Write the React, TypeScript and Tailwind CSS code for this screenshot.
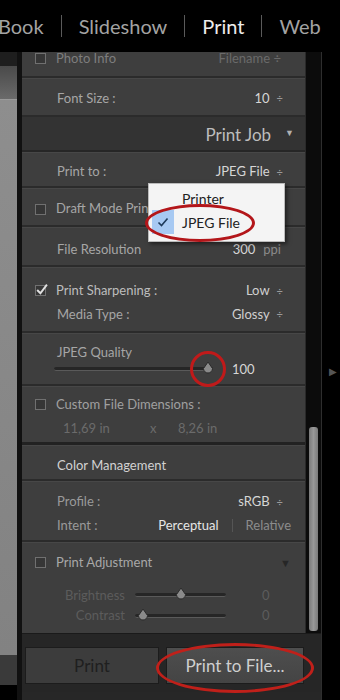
import React from "react";

const font = { fontFamily: "Lato, 'Open Sans', sans-serif" };

const Stepper = () => <span className="ml-[7px] text-[11px] text-[#9a9a9a]">÷</span>;

const Check = ({ checked = false }: { checked?: boolean }) => (
  <span className="relative w-[11px] h-[11px] border border-[#707070] bg-[#363636] shrink-0">
    {checked && (
      <svg viewBox="0 0 12 12" className="absolute -left-[1px] -top-[3px] w-[13px] h-[13px]">
        <path d="M2 6.5 L5 9.5 L11 1.5" fill="none" stroke="#e0e0e0" strokeWidth="1.8" />
      </svg>
    )}
  </span>
);

const Row = ({ h, children, className = "" }: { h: string; children: React.ReactNode; className?: string }) => (
  <div className={`${h} border-b-2 border-[#2b2b2b] shadow-[inset_0_1px_0_#474747] ${className}`}>{children}</div>
);

const Slider = ({ w, pos }: { w: string; pos: string }) => (
  <div className={`relative ${w} h-[4px] rounded-full bg-[#262626] border-b border-[#5a5a5a]`}>
    <div className={`absolute ${pos} -top-[6px] w-[12px] h-[13px]`}>
      <svg viewBox="0 0 12 13" className="w-full h-full">
        <path d="M6 1 L10.5 7.5 A4.5 4.5 0 1 1 1.5 7.5 Z" fill="#8a8a8a" stroke="#2a2a2a" strokeWidth="1" />
      </svg>
    </div>
  </div>
);

export default function App() {
  return (
    <div className="relative w-[340px] h-[700px] bg-black overflow-hidden" style={font}>
      {/* module picker */}
      <div className="h-[52px] flex items-center text-[20px] text-[#a3a3a3]">
        <span className="ml-[-2px]">Book</span>
        <span className="mx-[17px] w-px h-[22px] bg-[#5a5a5a]" />
        <span>Slideshow</span>
        <span className="mx-[17px] w-px h-[22px] bg-[#5a5a5a]" />
        <span className="text-[#ececec]">Print</span>
        <span className="mx-[17px] w-px h-[22px] bg-[#5a5a5a]" />
        <span>Web</span>
      </div>

      <div className="flex h-[648px]">
        {/* left preview edge */}
        <div className="w-[17px] flex flex-col">
          <div className="h-[14px] bg-[#1e1e1e]" />
          <div className="h-[34px] bg-gradient-to-b from-[#4a4a4a] to-[#6a6a6a] border-b border-[#9a9a9a]" />
          <div className="h-[555px] bg-gradient-to-b from-[#8e8e8e] to-[#828282]" />
          <div className="h-[30px] bg-[#3a3a3a]" />
        </div>
        <div className="w-[5px] bg-[#111]" />

        {/* right panel */}
        <div className="w-[299px] flex flex-col bg-[#272727]">
          <div className="flex h-[581px]">
            <div className="w-[284px] overflow-hidden bg-[#3e3e3e] border-r border-[#2a2a2a] text-[13px] text-[#a6a6a6]">
              <Row h="h-[28px]" className="flex items-center pl-[13px] pr-[24px] -mt-[2px]">
                <span className="flex -mt-[10px]"><Check /></span>
                <span className="ml-[10px] flex-1 text-[#7d7d7d] -mt-[9px]">Photo Info</span>
                <span className="text-[#6a6a6a] -mt-[9px]">Filename ÷</span>
              </Row>
              <Row h="h-[39px]" className="flex items-center pl-[35px] pr-[22px] pt-[4px]">
                <span className="flex-1">Font Size :</span>
                <span className="text-[#d6d6d6]">10</span>
                <Stepper />
              </Row>
              <div className="h-[35px] bg-[#333] border-b-2 border-[#262626] flex items-center justify-end pr-[11px] pt-[3px]">
                <span className="text-[17px] text-[#bdbdbd]">Print Job</span>
                <span className="ml-[14px] text-[9px] text-[#b0b0b0] -mt-[4px]">▼</span>
              </div>
              <Row h="h-[36px]" className="flex items-center pl-[35px] pr-[22px] pt-[6px]">
                <span className="flex-1">Print to :</span>
                <span className="text-[#d6d6d6]">JPEG File</span>
                <Stepper />
              </Row>
              <Row h="h-[39px]" className="flex items-center pl-[13px] pr-[22px] pt-[5px]">
                <Check />
                <span className="ml-[10px] flex-1">Draft Mode Printing</span>
              </Row>
              <Row h="h-[40px]" className="flex items-center pl-[35px] pr-[24px] pt-[8px]">
                <span className="flex-1">File Resolution</span>
                <span className="text-[#d6d6d6]">300</span>
                <span className="ml-[8px] text-[#8a8a8a]">ppi</span>
              </Row>
              <Row h="h-[66px]" className="flex flex-col justify-center gap-[4px] pl-[13px] pr-[22px] pt-[7px]">
                <div className="flex items-center">
                  <Check checked />
                  <span className="ml-[10px] flex-1 text-[#bdbdbd]">Print Sharpening :</span>
                  <span className="text-[#d0d0d0]">Low</span>
                  <Stepper />
                </div>
                <div className="flex items-center pl-[22px]">
                  <span className="flex-1">Media Type :</span>
                  <span className="text-[#d0d0d0]">Glossy</span>
                  <Stepper />
                </div>
              </Row>
              <Row h="h-[53px]" className="flex flex-col pl-[35px] pr-[22px] pt-[10px]">
                <span>JPEG Quality</span>
                <div className="flex items-center -mt-[3px]">
                  <Slider w="w-[159px] -ml-[3px]" pos="left-[148px]" />
                  <span className="ml-[19px] text-[#d6d6d6]">100</span>
                </div>
              </Row>
              <div className="h-[59px] border-b-[3px] border-[#222] shadow-[inset_0_1px_0_#474747] flex flex-col justify-center gap-[4px] pl-[13px] pt-[5px]">
                <div className="flex items-center">
                  <Check />
                  <span className="ml-[10px] text-[#a0a0a0]">Custom File Dimensions :</span>
                </div>
                <div className="flex text-[#6b6b6b] pl-[28px]">
                  <span className="w-[87px]">11,69 in</span>
                  <span className="w-[28px]">x</span>
                  <span>8,26 in</span>
                </div>
              </div>
              <Row h="h-[36px]" className="flex items-center pl-[35px] pt-[7px]">
                <span className="text-[#d2d2d2]">Color Management</span>
              </Row>
              <Row h="h-[61px]" className="flex flex-col justify-center gap-[4px] pl-[35px] pr-[14px] pt-[6px]">
                <div className="flex items-center pr-[8px]">
                  <span className="flex-1 text-[#9a9a9a]">Profile :</span>
                  <span className="text-[#d6d6d6]">sRGB</span>
                  <Stepper />
                </div>
                <div className="flex items-center">
                  <span className="flex-1 text-[#9a9a9a]">Intent :</span>
                  <span className="text-[#e6e6e6]">Perceptual</span>
                  <span className="mx-[13px] w-px h-[13px] bg-[#555]" />
                  <span className="text-[#8c8c8c]">Relative</span>
                </div>
              </Row>
              <div className="h-[88px] shadow-[inset_0_1px_0_#474747] pl-[13px] pr-[14px] pt-[11px]">
                <div className="flex items-center">
                  <Check />
                  <span className="ml-[10px] flex-1 text-[#a8a8a8]">Print Adjustment</span>
                  <span className="text-[11px] text-[#262626]">▼</span>
                </div>
                <div className="mt-[13px] flex items-center text-[#5c5c5c]">
                  <span className="w-[90px] text-right">Brightness</span>
                  <div className="ml-[10px]"><Slider w="w-[91px]" pos="left-[40px]" /></div>
                  <span className="ml-[36px]">0</span>
                </div>
                <div className="mt-[1px] flex items-center text-[#5c5c5c]">
                  <span className="w-[90px] text-right">Contrast</span>
                  <div className="ml-[10px]"><Slider w="w-[91px]" pos="left-[2px]" /></div>
                  <span className="ml-[36px]">0</span>
                </div>
              </div>
            </div>
            {/* scrollbar */}
            <div className="w-[15px] bg-[#0c0c0c] flex flex-col items-center">
              <div className="mt-[375px] w-[9px] h-[204px] rounded-[3px] bg-gradient-to-r from-[#7a7a7a] via-[#989898] to-[#7a7a7a]" />
            </div>
          </div>
          {/* footer buttons */}
          <div className="h-[59px] bg-[#262626] border-t border-[#1a1a1a] flex gap-[7px] pl-[3px] pr-[17px] pt-[13px] pb-[8px]">
            <div className="w-[134px] bg-[#3c3c3c] border border-[#1c1c1c] flex items-center justify-center text-[17px] text-[#1f1f1f]">
              Print
            </div>
            <div className="flex-1 bg-gradient-to-b from-[#4e4e4e] to-[#444] border border-[#1c1c1c] flex items-center justify-center text-[17px] text-[#cfcfcf]">
              Print to File...
            </div>
          </div>
        </div>

        <div className="w-px bg-[#2e2e2e]" />
        <div className="flex-1 flex items-start">
          <span className="mt-[312px] ml-[7px] text-[10px] text-[#555]">▶</span>
        </div>
      </div>

      {/* Print to menu */}
      <div className="absolute left-[148px] top-[183px] w-[137px] h-[59px] bg-[#f4f4f4] border border-[#bbb] shadow-[2px_2px_4px_rgba(0,0,0,0.5)] text-[14px] text-[#222]">
        <div className="h-[26px] flex items-center pl-[33px] pt-[2px]">Printer</div>
        <div className="h-[24px] flex items-center">
          <div className="ml-[3px] w-[22px] h-full bg-[#a7c9f2] flex items-center justify-center">
            <svg viewBox="0 0 12 12" className="w-[12px] h-[12px]">
              <path d="M1.5 6.5 L4.5 9.5 L10.5 2.5" fill="none" stroke="#1e3a5a" strokeWidth="1.6" />
            </svg>
          </div>
          <span className="ml-[8px]">JPEG File</span>
        </div>
      </div>

      {/* red annotations */}
      <div className="absolute left-[145px] top-[204px] w-[110px] h-[38px] rounded-[50%] border-[3px] border-[#b3161a]" />
      <div className="absolute left-[190px] top-[351px] w-[36px] h-[36px] rounded-full border-[3px] border-[#c01a1a]" />
      <div className="absolute left-[156px] top-[643px] w-[158px] h-[50px] rounded-[50%] border-[3px] border-[#c0201a]" />
    </div>
  );
}
